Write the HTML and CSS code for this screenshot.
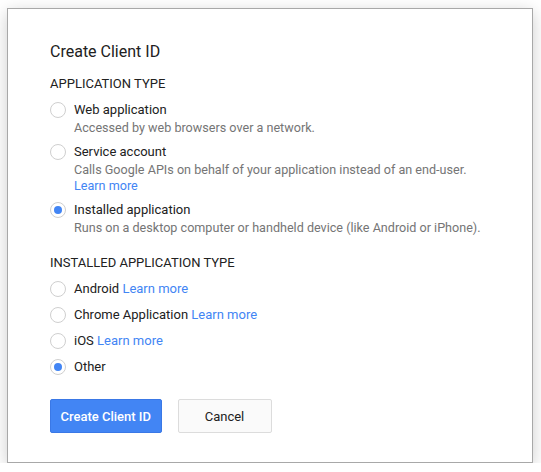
FILE: index.html
```html
<!DOCTYPE html>
<html>
<head>
<meta charset="utf-8">
<link rel="stylesheet" href="styles.css">
</head>
<body>
<div class="dialog">
  <div class="title">Create Client ID</div>

  <div class="section-label">APPLICATION TYPE</div>
  <div class="options">
    <div class="option">
      <span class="radio"></span>
      <div class="option-text">
        <div class="label">Web application</div>
        <div class="desc">Accessed by web browsers over a network.</div>
      </div>
    </div>
    <div class="option">
      <span class="radio"></span>
      <div class="option-text">
        <div class="label">Service account</div>
        <div class="desc">Calls Google APIs on behalf of your application instead of an end-user.<br><a class="link" href="#">Learn more</a></div>
      </div>
    </div>
    <div class="option">
      <span class="radio checked"></span>
      <div class="option-text">
        <div class="label">Installed application</div>
        <div class="desc">Runs on a desktop computer or handheld device (like Android or iPhone).</div>
      </div>
    </div>
  </div>

  <div class="section-label second">INSTALLED APPLICATION TYPE</div>
  <div class="options compact">
    <div class="option">
      <span class="radio"></span>
      <div class="label">Android <a class="link" href="#">Learn more</a></div>
    </div>
    <div class="option">
      <span class="radio"></span>
      <div class="label">Chrome Application <a class="link" href="#">Learn more</a></div>
    </div>
    <div class="option">
      <span class="radio"></span>
      <div class="label">iOS <a class="link" href="#">Learn more</a></div>
    </div>
    <div class="option">
      <span class="radio checked"></span>
      <div class="label">Other</div>
    </div>
  </div>

  <div class="buttons">
    <button class="btn primary">Create Client ID</button>
    <button class="btn secondary">Cancel</button>
  </div>
</div>
</body>
</html>
```
FILE: styles.css
```css
html, body {
  margin: 0;
  padding: 0;
  background: #ffffff;
}

body {
  font-family: Roboto, "Liberation Sans", Arial, sans-serif;
  color: #212121;
  padding: 8px 0 0 7px;
}

.dialog {
  box-sizing: border-box;
  width: 526px;
  border: 1px solid #a8a8a8;
  background: #fff;
  box-shadow: 0 4px 16px rgba(0, 0, 0, 0.2);
  padding: 33px 42px 29px 42px;
}

.title {
  font-size: 16px;
  line-height: 20px;
  color: #212121;
}

.section-label {
  margin-top: 14px;
  font-size: 13px;
  line-height: 16px;
  letter-spacing: 0;
  color: #212121;
}

.section-label.second {
  margin-top: 19px;
}

.options {
  margin-top: 9px;
  display: flex;
  flex-direction: column;
  gap: 7px;
}

.options.compact {
  gap: 8px;
}

.option {
  display: flex;
  align-items: flex-start;
  gap: 8px;
}

.radio {
  box-sizing: border-box;
  flex: none;
  width: 16px;
  height: 16px;
  margin-top: 1px;
  border: 1px solid #cfcfcf;
  border-radius: 50%;
  display: flex;
  align-items: center;
  justify-content: center;
}

.radio.checked::after {
  content: "";
  width: 8px;
  height: 8px;
  border-radius: 50%;
  background: #4285f4;
}

.label {
  font-size: 13px;
  line-height: 18px;
  color: #212121;
}

.desc {
  margin-top: 1px;
  font-size: 12.6px;
  line-height: 16px;
  color: #757575;
}

.link {
  color: #4285f4;
  text-decoration: none;
}

.buttons {
  margin-top: 23px;
  display: flex;
  gap: 16px;
}

.btn {
  box-sizing: border-box;
  height: 34px;
  min-width: 94px;
  padding: 0 9.5px;
  border-radius: 2px;
  font-family: Roboto, "Liberation Sans", Arial, sans-serif;
  font-size: 13px;
}

.btn.primary {
  background: #4285f4;
  border: 1px solid #3a78e6;
  color: #fff;
  font-weight: 500;
}

.btn.secondary {
  background: #fafafa;
  border: 1px solid #dcdcdc;
  color: #212121;
  font-weight: 400;
}
```
